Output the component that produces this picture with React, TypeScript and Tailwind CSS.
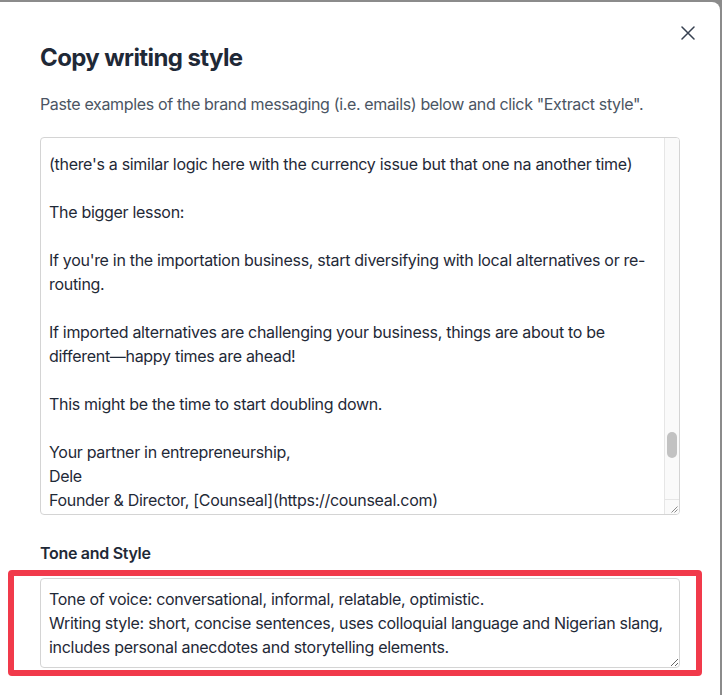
import { useLayoutEffect, useRef } from 'react';

// earlier pasted emails (scrolled out of view)
const EARLIER = [
  'Subject: Why the naira wahala might be good news',
  '',
  'Hey there,',
  '',
  'Happy new week!',
  '',
  'Last week I sat down with a client who imports',
  'spare parts from China.',
  '',
  'He was worried. Prices keep going up,',
  'and his customers are starting to complain.',
  '',
  'I told him something he didn\'t expect:',
  '',
  '"This might be the best thing for your business."',
  '',
  'He looked at me like I was mad.',
  '',
  'But hear me out.',
  '',
  'When imports get expensive, local options',
  'suddenly look very attractive.',
  '',
  'Customers start asking: "Abeg, is there',
  'something made here that works just as well?"',
  '',
  'And that is where the opportunity lies.',
  '',
  'Your partner in entrepreneurship,',
  'Dele',
  '',
  '---',
  '',
];

const VISIBLE = `(there's a similar logic here with the currency issue but that one na another time)

The bigger lesson:

If you're in the importation business, start diversifying with local alternatives or re-routing.

If imported alternatives are challenging your business, things are about to be different—happy times are ahead!

This might be the time to start doubling down.

Your partner in entrepreneurship,
Dele
Founder & Director, [Counseal](https://counseal.com)`;

const LATER = `

P.S. Want to register your business in Nigeria?
Reply to this email and let's talk.

---

You are receiving this because you signed up
for the Counseal newsletter.

Unsubscribe | Update preferences

Counseal, Lagos, Nigeria



`;

const LINES_BEFORE = 178;
const prefix: string[] = [];
for (let i = 0; prefix.length < LINES_BEFORE - 1; i++) prefix.push(EARLIER[i % EARLIER.length]);
prefix.push('');
const EXAMPLES = prefix.join('\n') + '\n' + VISIBLE + LATER;

const TONE = `Tone of voice: conversational, informal, relatable, optimistic.
Writing style: short, concise sentences, uses colloquial language and Nigerian slang, includes personal anecdotes and storytelling elements.`;

function ResizeGrip() {
  return (
    <svg width="8" height="8" viewBox="0 0 8 8" fill="none" stroke="#8a8a8a" strokeWidth="1">
      <path d="M7.5 1.5L1.5 7.5M7.5 4.5L4.5 7.5" />
    </svg>
  );
}

export default function App() {
  const ref = useRef<HTMLTextAreaElement>(null);

  useLayoutEffect(() => {
    if (ref.current) ref.current.scrollTop = LINES_BEFORE * 24 - 6;
  }, []);

  return (
    <div className="h-[695px] overflow-hidden bg-[#8b8b8b] pt-[2px] font-['Inter',sans-serif]">
      <div className="flex h-full w-[720px] flex-col rounded-tr-lg bg-white pl-10 pr-[25px] pt-6">
        {/* Header */}
        <div className="flex items-start justify-between">
          <h2 className="mt-4 text-2xl font-bold leading-8 tracking-[-0.6px] text-[#1f2937]">Copy writing style</h2>
          <button className="flex h-[14px] w-[14px] items-center justify-center text-[#374151]">
            <svg width="14" height="14" viewBox="0 0 14 14" fill="none" stroke="currentColor" strokeWidth="1.5" strokeLinecap="round">
              <path d="M1 1L13 13M13 1L1 13" />
            </svg>
          </button>
        </div>

        <div className="flex flex-col pr-[15px]">
          <p className="mt-[18px] text-base leading-6 tracking-[-0.35px] text-[#4b5563]">
            Paste examples of the brand messaging (i.e. emails) below and click "Extract style".
          </p>

          <div className="relative mt-[21px]">
            <textarea
              ref={ref}
              defaultValue={EXAMPLES}
              className="block h-[378px] w-full resize-y rounded border border-[#d4d4d4] py-2 pl-2 pr-[23px] text-base leading-6 tracking-[-0.3px] text-[#1f2937] outline-none"
            />
            {/* scrollbar drawn over the textarea edge */}
            <div className="pointer-events-none absolute bottom-[1px] right-[1px] top-[1px] flex w-[15px] flex-col rounded-r-[3px] border-l border-[#e6e6e6] bg-[#fafafa]">
              <div className="flex flex-1 flex-col px-[2px] pt-[294px]">
                <div className="h-[26px] rounded-full bg-[#c2c2c2]" />
              </div>
              <div className="flex h-[15px] items-end justify-end border-t border-[#e6e6e6] pb-[1px] pr-[1px]">
                <ResizeGrip />
              </div>
            </div>
          </div>

          <label className="mt-[26px] block text-base font-semibold leading-6 tracking-[-0.3px] text-[#1f2937]">Tone and Style</label>

          <div className="relative mt-[13px]">
            <textarea
              defaultValue={TONE}
              className="block h-[90px] w-full rounded border border-[#d4d4d4] px-2 py-2 text-base leading-6 tracking-[-0.3px] text-[#1f2937] outline-none"
            />
            {/* highlight annotation */}
            <div className="pointer-events-none absolute -bottom-[8px] -left-[32px] -right-[22px] -top-[8px] rounded-[4px] border-[6px] border-[#f13a4b]" />
          </div>
        </div>
      </div>
    </div>
  );
}
